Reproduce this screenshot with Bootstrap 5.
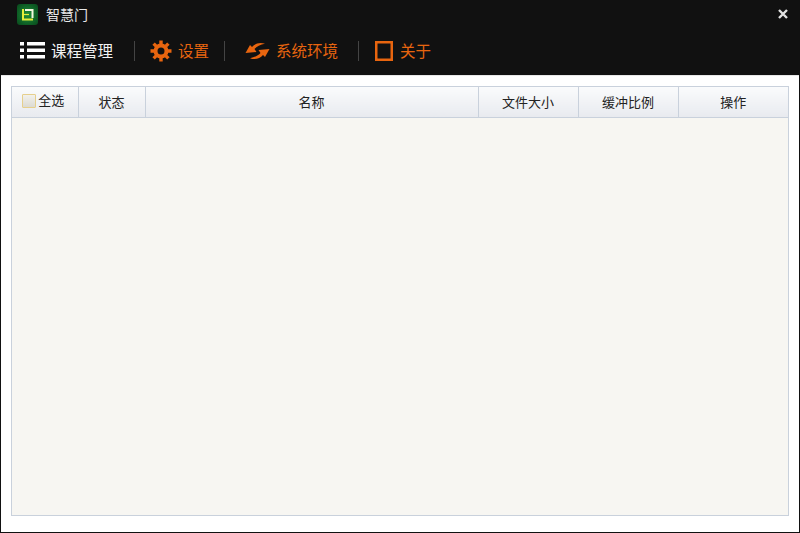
<!DOCTYPE html>
<html lang="zh-CN">
<head>
<meta charset="UTF-8">
<title>智慧门</title>
<link href="https://cdn.jsdelivr.net/npm/bootstrap@5.3.0/dist/css/bootstrap.min.css" rel="stylesheet">
<style>
html, body { height: 100%; }
body { background: #111; font-family: "Liberation Sans", "Noto Sans CJK SC", sans-serif; font-size: 14px; overflow: hidden; }
.app-window { height: 533px; width: 800px; }
.title-row { height: 29px; padding: 0 12px 0 17px; }
.app-logo { width: 21px; height: 21px; border-radius: 3px; background: radial-gradient(circle, #1f8f38 0%, #0d5c24 70%, #0a471c 100%); }
.app-name { color: #e8e8e8; font-size: 14px; margin: 1px 0 0 8px; }
.close-x { line-height: 1; margin-top: -3px; }
.tool-row { height: 46px; padding: 0 0 3px 20px; }
.tool-item { color: #e8650f; font-size: 15.5px; white-space: nowrap; }
.tool-item.active { color: #f2f2f2; }
.tool-item span { margin-top: 2px; }
.tool-sep { width: 1px; height: 20px; background: #444; }
.m-21 { margin-left: 21px; }
.m-15 { margin-left: 15px; }
.m-20 { margin-left: 20px; }
.m-16 { margin-left: 16px; }
.icon-gap { margin-right: 6px; }
.icon-gap-wide { margin-right: 7px; }
.white-pane { background: #fff; margin: 0 1px 1px 1px; padding: 10px 10px 16px 10px; border-top: 1px solid #e8e8e8; }
.grid-box { border: 1px solid #c9d1dc; background: #f7f6f2; height: 100%; width: 778px; }
.grid-head { table-layout: fixed; width: 776px; margin: 0; border-collapse: collapse; }
.grid-head th { height: 30px; padding: 1px 0 0; font-weight: 400; font-size: 13px; color: #222; text-align: center; vertical-align: middle;
  background: linear-gradient(#fafbfc, #e8eaef); border-right: 1px solid #c9d1dc; border-bottom: 1px solid #c9d1dc; }
.grid-head th:last-child { border-right: 0; }
.grid-head th:nth-child(1) { width: 66px; padding-right: 3px; }
.grid-head th:nth-child(2) { width: 67px; }
.grid-head th:nth-child(3) { width: 333px; }
.grid-head th:nth-child(4), .grid-head th:nth-child(5) { width: 100px; }
.grid-head th:nth-child(6) { width: 110px; }
.check-box { width: 14px; height: 14px; margin-right: 2px; display: inline-block; border: 1px solid #e6cf8c; background: linear-gradient(#f2f1ec, #dcdad2); border-radius: 1px; }
</style>
</head>
<body>
<div class="app-window d-flex flex-column">
  <div class="title-row d-flex align-items-center">
    <span class="app-logo d-flex align-items-center justify-content-center">
      <svg width="13" height="13" viewBox="0 0 13 13" fill="none" stroke-width="2">
        <path d="M4 2H11.5V10" stroke="#f4f7e0"/>
        <path d="M2 1V11.5H12" stroke="#e6ee3a"/>
        <path d="M3 6.5H8" stroke="#e6ee3a" stroke-width="1.2"/>
      </svg>
    </span>
    <span class="app-name">智慧门</span>
    <span class="close-x ms-auto">
      <svg width="10" height="10" viewBox="0 0 10 10"><path d="M1 1L9 9M9 1L1 9" stroke="#e2e2e2" stroke-width="2.4"/></svg>
    </span>
  </div>
  <div class="tool-row d-flex align-items-center">
    <div class="tool-item active d-flex align-items-center">
      <svg width="25" height="17" viewBox="0 0 25 17" fill="#fff" class="icon-gap"><rect y="0" width="4" height="3.5"/><rect y="6.5" width="4" height="3.5"/><rect y="13" width="4" height="3.5"/><rect x="7" y="0" width="18" height="3.5"/><rect x="7" y="6.5" width="18" height="3.5"/><rect x="7" y="13" width="18" height="3.5"/></svg>
      <span>课程管理</span>
    </div>
    <div class="tool-sep m-21"></div>
    <div class="tool-item d-flex align-items-center m-15">
      <svg width="22" height="22" viewBox="0 0 22 22" class="icon-gap">
        <circle cx="11" cy="11" r="5.5" fill="none" stroke="#e8650f" stroke-width="4"/>
        <g stroke="#e8650f" stroke-width="3.4"><path d="M11 0.5V4.5M11 17.5V21.5M0.5 11H4.5M17.5 11H21.5M3.6 3.6L6.4 6.4M15.6 15.6L18.4 18.4M18.4 3.6L15.6 6.4M6.4 15.6L3.6 18.4"/></g>
      </svg>
      <span>设置</span>
    </div>
    <div class="tool-sep m-15"></div>
    <div class="tool-item d-flex align-items-center m-20">
      <svg width="25" height="18" viewBox="0 0 25 18" fill="#e8650f" class="icon-gap">
        <path d="M0.5 11L5 3 7 5C10 1.5 15 -0.3 20 1.8 15.5 2.5 11.5 4.5 9.5 7L11.5 10Z"/>
        <path d="M0.5 11L5 3 7 5C10 1.5 15 -0.3 20 1.8 15.5 2.5 11.5 4.5 9.5 7L11.5 10Z" transform="rotate(180 12.5 9)"/>
      </svg>
      <span>系统环境</span>
    </div>
    <div class="tool-sep m-20"></div>
    <div class="tool-item d-flex align-items-center m-16">
      <svg width="18" height="20" viewBox="0 0 18 20" class="icon-gap-wide">
        <path d="M1.25 1.25H16.75V18.75H1.25Z" fill="none" stroke="#e8650f" stroke-width="2.5"/>
      </svg>
      <span>关于</span>
    </div>
  </div>
  <div class="white-pane flex-grow-1">
    <div class="grid-box">
      <table class="grid-head">
        <thead>
          <tr>
            <th><span class="d-inline-flex align-items-center"><span class="check-box"></span>全选</span></th>
            <th>状态</th>
            <th>名称</th>
            <th>文件大小</th>
            <th>缓冲比例</th>
            <th>操作</th>
          </tr>
        </thead>
      </table>
    </div>
  </div>
</div>
<script src="https://cdn.jsdelivr.net/npm/bootstrap@5.3.0/dist/js/bootstrap.bundle.min.js"></script>
</body>
</html>
